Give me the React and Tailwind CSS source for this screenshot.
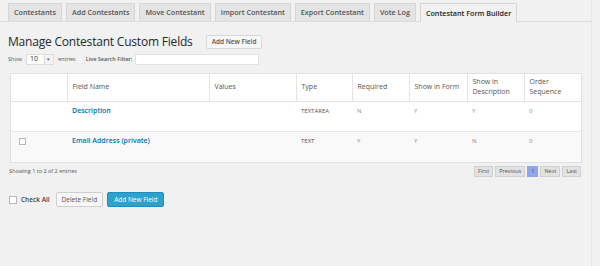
const tabs = [
  "Contestants",
  "Add Contestants",
  "Move Contestant",
  "Import Contestant",
  "Export Contestant",
  "Vote Log",
];

const fields = [
  { name: "Description", type: "TEXTAREA", required: "N", form: "Y", desc: "Y", order: "0", check: false },
  { name: "Email Address (private)", type: "TEXT", required: "Y", form: "Y", desc: "N", order: "0", check: true },
];

export default function App() {
  return (
    <div className="w-[600px] h-[266px] bg-[#f1f1f1] font-['Open_Sans',sans-serif] text-[#444] overflow-hidden">
      <div className="w-[592px] h-full border-r border-[#e8e8e8]">
        {/* Tabs */}
        <div className="flex items-end gap-[4px] pl-[8px] pt-[3px] border-b border-[#dcdcdc]">
          {tabs.map((t) => (
            <div
              key={t}
              className="h-[18px] px-[5px] flex items-center bg-[#e4e4e4] border border-b-0 border-[#d6d6d6] text-[7.2px] font-semibold text-[#555] whitespace-nowrap"
            >
              {t}
            </div>
          ))}
          <div className="h-[19px] -mb-px px-[5px] flex items-center bg-[#f1f1f1] border border-b-0 border-[#d6d6d6] text-[7.2px] font-semibold text-[#222] whitespace-nowrap">
            Contestant Form Builder
          </div>
        </div>

        {/* Heading */}
        <div className="flex items-center pl-[8px] mt-[12px]">
          <h2 className="text-[12px] leading-[16px] tracking-[-0.2px] text-[#23282d]">
            Manage Contestant Custom Fields
          </h2>
          <button className="ml-[13px] h-[14px] px-[5px] bg-[#f7f7f7] border border-[#d8d8d8] rounded-[2px] text-[6.5px] font-semibold text-[#555]">
            Add New Field
          </button>
        </div>

        {/* Controls */}
        <div className="flex items-center pl-[8px] mt-[4px] text-[5.5px] text-[#555]">
          <span>Show</span>
          <div className="ml-[4px] w-[28px] h-[11px] bg-white border border-[#ddd] flex items-center">
            <span className="pl-[3px] text-[7px] text-[#333] flex-1">10</span>
            <span className="w-[9px] h-full bg-[#f3f3f3] border-l border-[#ddd] flex items-center justify-center text-[5px] text-[#666]">
              ▾
            </span>
          </div>
          <span className="ml-[4px]">entries</span>
          <span className="ml-[10px] font-semibold">Live Search Filter:</span>
          <div className="ml-[3px] w-[124px] h-[11px] bg-white border border-[#e2e2e2]" />
        </div>

        {/* Table */}
        <div className="ml-[10px] mt-[8px] w-[572px] border border-[#e1e1e1] bg-white">
          <table className="w-full table-fixed border-collapse">
            <thead>
              <tr className="h-[27px] text-[7px] text-[#555] text-left">
                <th className="w-[56px] border-r border-[#e5e5e5] font-normal" />
                <th className="w-[142px] border-r border-[#e5e5e5] font-normal px-[5px]">Field Name</th>
                <th className="w-[87px] border-r border-[#e5e5e5] font-normal px-[5px]">Values</th>
                <th className="w-[56px] border-r border-[#e5e5e5] font-normal px-[5px]">Type</th>
                <th className="w-[57px] border-r border-[#e5e5e5] font-normal px-[5px]">Required</th>
                <th className="w-[58px] border-r border-[#e5e5e5] font-normal px-[5px]">Show in Form</th>
                <th className="w-[57px] border-r border-[#e5e5e5] font-normal px-[5px] leading-[10px]">
                  Show in Description
                </th>
                <th className="font-normal px-[5px] leading-[10px]">Order Sequence</th>
              </tr>
            </thead>
            <tbody>
              {fields.map((f, i) => (
                <tr
                  key={f.name}
                  className={`align-top border-t border-[#e5e5e5] ${i % 2 ? "bg-[#f9f9f9] h-[31px]" : "bg-white h-[30px]"}`}
                >
                  <td className="pt-[6px] pl-[8px]">
                    {f.check && <div className="w-[7px] h-[7px] bg-white border border-[#b4b9be]" />}
                  </td>
                  <td className="pt-[4px] px-[5px] text-[7px] leading-[10px] font-semibold text-[#0073aa]">{f.name}</td>
                  <td />
                  <td className="pt-[4px] px-[5px] text-[6px] leading-[10px] text-[#555]">{f.type}</td>
                  <td className="pt-[4px] px-[5px] text-[6px] leading-[10px] text-[#888]">{f.required}</td>
                  <td className="pt-[4px] px-[5px] text-[6px] leading-[10px] text-[#888]">{f.form}</td>
                  <td className="pt-[4px] px-[5px] text-[6px] leading-[10px] text-[#888]">{f.desc}</td>
                  <td className="pt-[4px] px-[5px] text-[6px] leading-[10px] text-[#888]">{f.order}</td>
                </tr>
              ))}
            </tbody>
          </table>
        </div>

        {/* Info + pagination */}
        <div className="w-[581px] flex items-center justify-between pl-[9px] mt-[3px]">
          <span className="text-[5.5px] text-[#555]">Showing 1 to 2 of 2 entries</span>
          <div className="flex items-center gap-[2px] text-[5.5px] text-[#555]">
            <span className="h-[11px] px-[3px] flex items-center bg-[#e2e2e2] border border-[#d0d0d0]">First</span>
            <span className="h-[11px] px-[3px] flex items-center bg-[#e2e2e2] border border-[#d0d0d0]">Previous</span>
            <span className="h-[11px] px-[3px] flex items-center bg-[#8fa5ee] border border-[#8fa5ee] text-[#555]">1</span>
            <span className="h-[11px] px-[3px] flex items-center bg-[#e2e2e2] border border-[#d0d0d0]">Next</span>
            <span className="h-[11px] px-[3px] flex items-center bg-[#e2e2e2] border border-[#d0d0d0]">Last</span>
          </div>
        </div>

        {/* Bulk actions */}
        <div className="flex items-center pl-[9px] mt-[15px]">
          <div className="w-[8px] h-[8px] bg-white border border-[#b4b9be]" />
          <span className="ml-[4px] text-[6.5px] font-semibold text-[#444]">Check All</span>
          <button className="ml-[6px] h-[15px] px-[5px] bg-[#f7f7f7] border border-[#cfcfcf] rounded-[2px] text-[6.5px] text-[#555]">
            Delete Field
          </button>
          <button className="ml-[4px] h-[15px] px-[6px] bg-[#2ea2cc] border border-[#1e8cbe] rounded-[2px] text-[6.5px] text-white">
            Add New Field
          </button>
        </div>
      </div>
    </div>
  );
}
